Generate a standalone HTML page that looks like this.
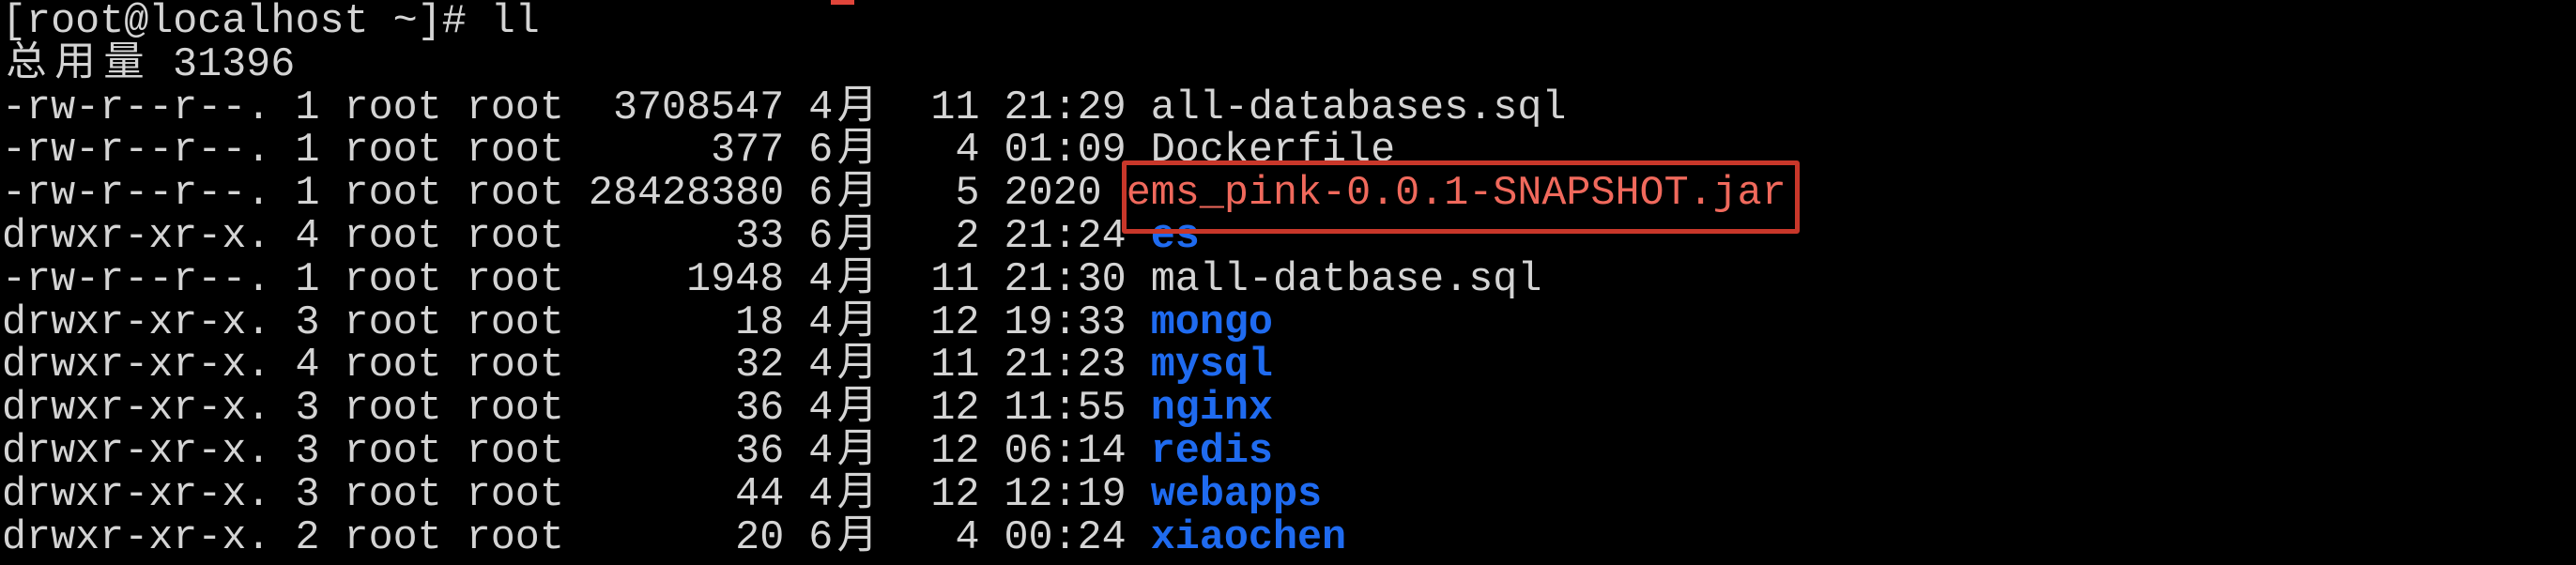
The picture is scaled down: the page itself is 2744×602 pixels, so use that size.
<html><head><style>
body{margin:0;background:#000;width:2744px;height:602px;overflow:hidden;position:relative}
pre{margin:0;position:absolute;left:2px;top:1px;font-family:"Liberation Mono","Noto Sans CJK SC",monospace;font-size:43.4px;line-height:45.8px;color:#d4d4d4}
.c{display:inline-block;width:52px;text-align:center}
.b{color:#1f6bf0;font-weight:bold}
.r{color:#f0695c}
.box{position:absolute;left:1195px;top:171px;width:712px;height:68px;border:5px solid #c8372a;border-radius:3px}
</style></head><body>
<div style="position:absolute;left:885px;top:0;width:25px;height:5px;background:#e0453a"></div>
<pre>[root@localhost ~]# ll
<span class="c">总</span><span class="c">用</span><span class="c">量</span> 31396
-rw-r--r--. 1 root root  3708547 4<span class="c">月</span>  11 21:29 all-databases.sql
-rw-r--r--. 1 root root      377 6<span class="c">月</span>   4 01:09 Dockerfile
-rw-r--r--. 1 root root 28428380 6<span class="c">月</span>   5 2020 <span class="r">ems_pink-0.0.1-SNAPSHOT.jar</span>
drwxr-xr-x. 4 root root       33 6<span class="c">月</span>   2 21:24 <span class="b">es</span>
-rw-r--r--. 1 root root     1948 4<span class="c">月</span>  11 21:30 mall-datbase.sql
drwxr-xr-x. 3 root root       18 4<span class="c">月</span>  12 19:33 <span class="b">mongo</span>
drwxr-xr-x. 4 root root       32 4<span class="c">月</span>  11 21:23 <span class="b">mysql</span>
drwxr-xr-x. 3 root root       36 4<span class="c">月</span>  12 11:55 <span class="b">nginx</span>
drwxr-xr-x. 3 root root       36 4<span class="c">月</span>  12 06:14 <span class="b">redis</span>
drwxr-xr-x. 3 root root       44 4<span class="c">月</span>  12 12:19 <span class="b">webapps</span>
drwxr-xr-x. 2 root root       20 6<span class="c">月</span>   4 00:24 <span class="b">xiaochen</span></pre>
<div class="box"></div>
</body></html>
